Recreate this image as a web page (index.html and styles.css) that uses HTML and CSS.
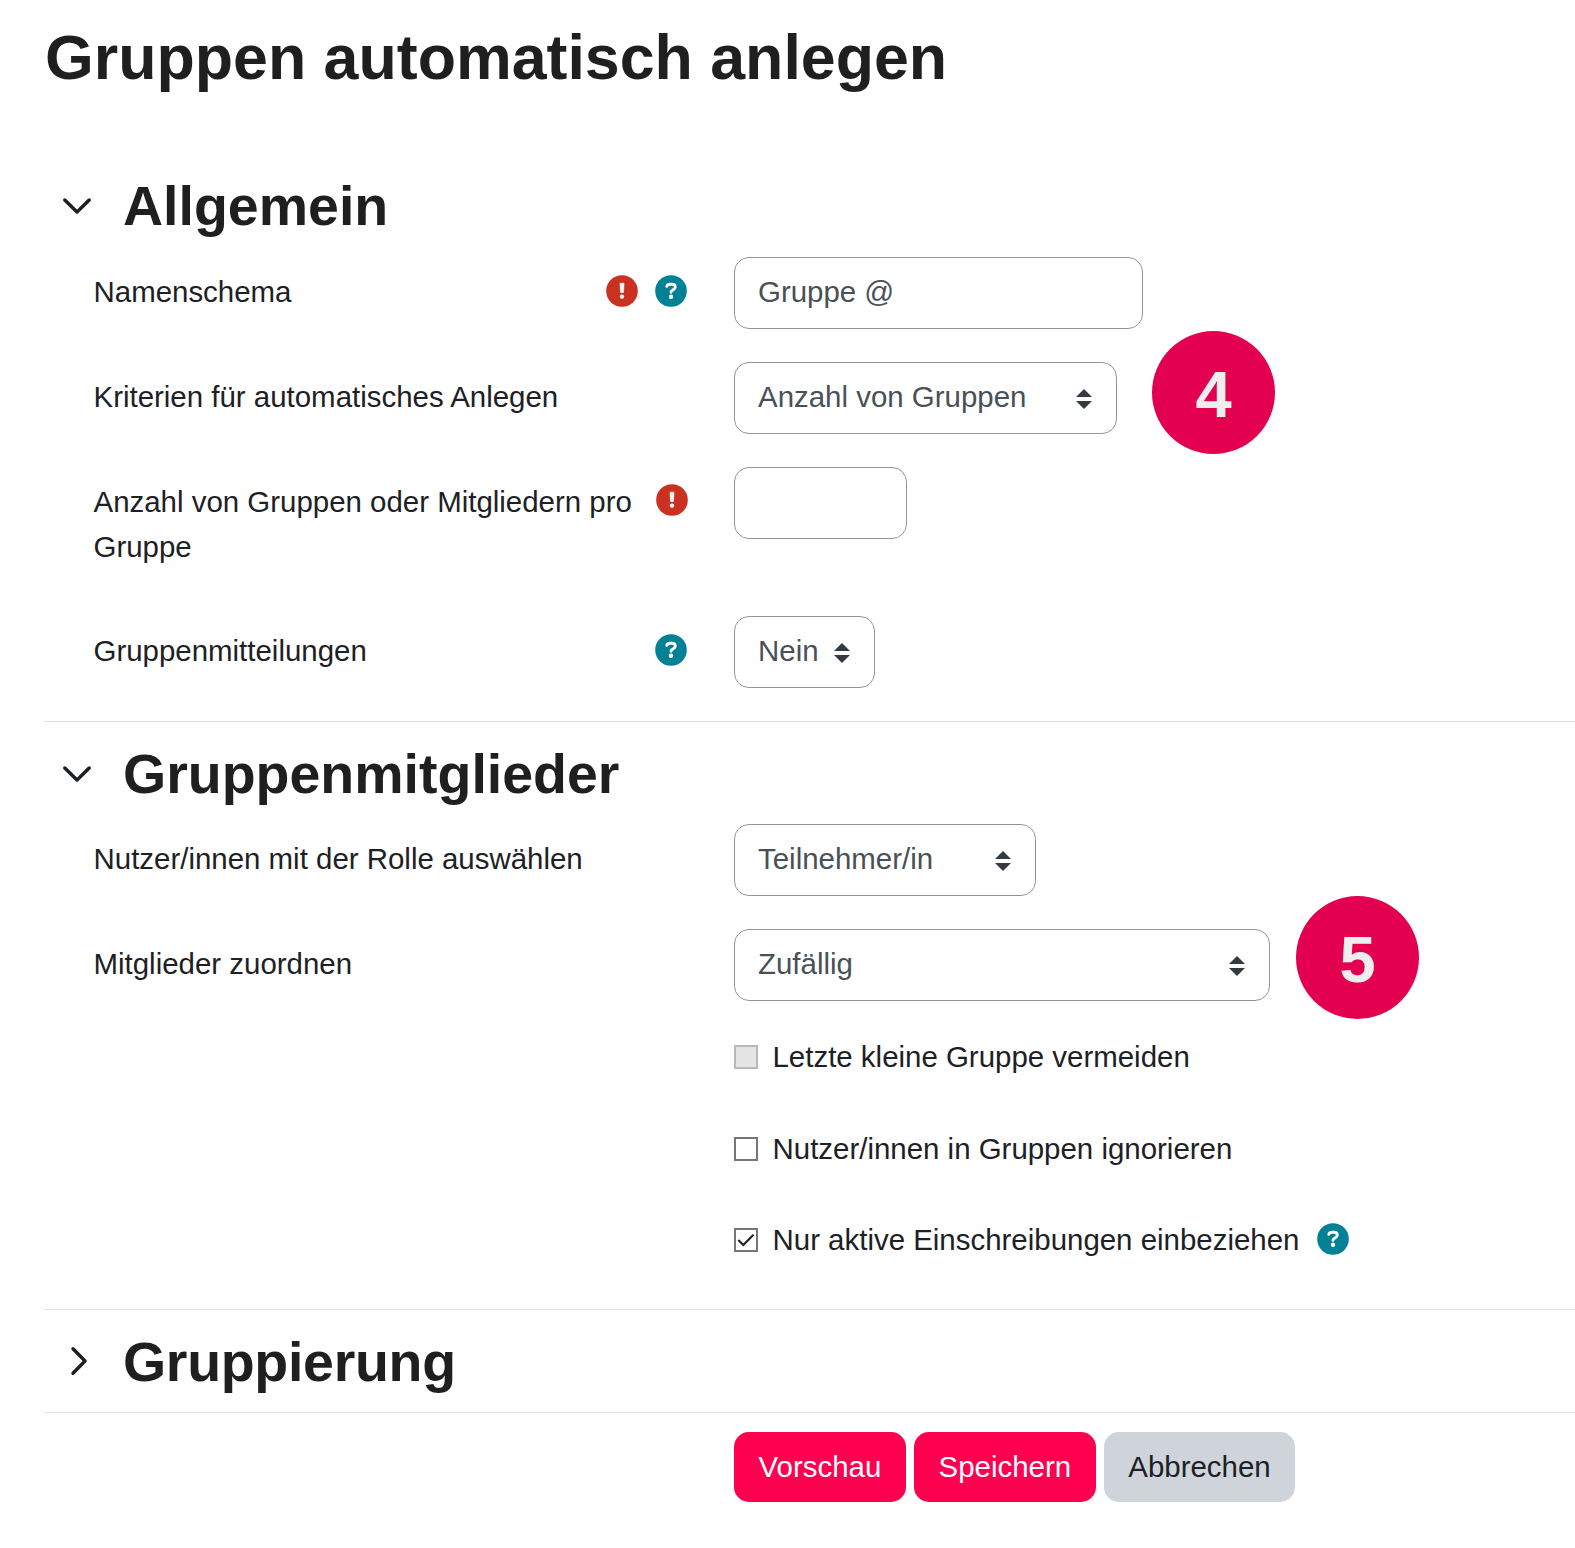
FILE: index.html
```html
<!DOCTYPE html>
<html lang="de">
<head>
    <meta charset="utf-8">
    <title>Gruppen automatisch anlegen</title>
    <meta name="viewport" content="width=device-width, initial-scale=1">
    <link rel="stylesheet" href="styles.css">
</head>
<body>
    <!-- icons used more than once -->
    <svg class="sprite" width="0" height="0">
        <symbol id="required" viewBox="0 0 32 32">
            <circle cx="16" cy="16" r="15.8" fill="#ca3120"/>
            <path d="M14 8.200h4l-.5 9.300h-3z" fill="#fff" stroke="#fff" stroke-width=".6" stroke-linejoin="round"/>
            <circle cx="16" cy="21.600" r="2.200" fill="#fff"/>
        </symbol>
        <symbol id="help" viewBox="0 0 32 32">
            <circle cx="16" cy="16" r="15.8" fill="#008196"/>
            <path d="M11.800 11.300C12.200 9.800 13.600 9.200 15.200 9.200h1.600c2.100 0 3.500 1.200 3.500 2.800 0 1.300-.8 2.100-2 2.800-1.400.8-2.300 1.100-2.300 2.400" fill="none" stroke="#fff" stroke-width="2.900" stroke-linecap="round"/>
            <circle cx="16" cy="21.800" r="2.200" fill="#fff"/>
        </symbol>
        <symbol id="chevron" viewBox="0 0 30 30">
            <path d="M2.800 9L15 21 27.200 9" fill="none" stroke="#1d2125" stroke-width="3.500" stroke-linecap="round" stroke-linejoin="round"/>
        </symbol>
    </svg>

    <div class="page">
        <h1>Gruppen automatisch anlegen</h1>
        <form action="">
            <section>
                <div class="header">
                    <svg class="chevron"><use href="#chevron"/></svg>
                    <h2>Allgemein</h2>
                </div>
                <div class="row">
                    <div class="label">
                        <label for="naming">Namenschema</label>
                        <svg class="icon"><use href="#required"/></svg>
                        <svg class="icon"><use href="#help"/></svg>
                    </div>
                    <input class="control naming" id="naming" type="text" value="Gruppe @">
                </div>
                <div class="row">
                    <div class="label"><label for="groupby">Kriterien für automatisches Anlegen</label></div>
                    <select class="control groupby" id="groupby">
                        <option>Anzahl von Gruppen</option>
                    </select>
                </div>
                <div class="row tall">
                    <div class="label">
                        <label for="number">Anzahl von Gruppen oder Mitgliedern pro Gruppe</label>
                        <svg class="icon"><use href="#required"/></svg>
                    </div>
                    <input class="control number" id="number" type="text">
                </div>
                <div class="row">
                    <div class="label">
                        <label for="messaging">Gruppenmitteilungen</label>
                        <svg class="icon"><use href="#help"/></svg>
                    </div>
                    <select class="control messaging" id="messaging">
                        <option>Nein</option>
                    </select>
                </div>
            </section>

            <section>
                <div class="header">
                    <svg class="chevron"><use href="#chevron"/></svg>
                    <h2>Gruppenmitglieder</h2>
                </div>
                <div class="row">
                    <div class="label"><label for="role">Nutzer/innen mit der Rolle auswählen</label></div>
                    <select class="control role" id="role">
                        <option>Teilnehmer/in</option>
                    </select>
                </div>
                <div class="row">
                    <div class="label"><label for="allocate">Mitglieder zuordnen</label></div>
                    <select class="control allocate" id="allocate">
                        <option>Zufällig</option>
                    </select>
                </div>
                <div class="check">
                    <input type="checkbox" id="small" disabled>
                    <label for="small">Letzte kleine Gruppe vermeiden</label>
                </div>
                <div class="check">
                    <input type="checkbox" id="ignore">
                    <label for="ignore">Nutzer/innen in Gruppen ignorieren</label>
                </div>
                <div class="check">
                    <input type="checkbox" id="active" checked>
                    <label for="active">Nur aktive Einschreibungen einbeziehen</label>
                    <svg class="icon"><use href="#help"/></svg>
                </div>
            </section>

            <section>
                <div class="header">
                    <svg class="chevron closed"><use href="#chevron"/></svg>
                    <h2>Gruppierung</h2>
                </div>
            </section>

            <div class="buttons">
                <button class="btn" type="button">Vorschau</button>
                <button class="btn" type="button">Speichern</button>
                <button class="btn cancel" type="button">Abbrechen</button>
            </div>
        </form>
        <div class="badge step4">4</div>
        <div class="badge step5">5</div>
    </div>
</body>
</html>
```
FILE: styles.css
```css
* {
    box-sizing: border-box;
}
body {
    margin: 0;
    background: #fff;
    color: #1d2125;
    font-family: "Liberation Sans", Arial, sans-serif;
    font-size: 29.44px;
    line-height: 45px;
}
.page {
    position: relative;
    height: 1548px;
    padding: 20px 0 0 44px;
    overflow: hidden;
}
.sprite {
    position: absolute;
}
h1, h2 {
    margin: 0;
    color: #1f1f1f;
    font-weight: bold;
}
h1 {
    margin-bottom: 59px;
    padding-left: 1px;
    font-size: 62.7px;
    line-height: 75px;
}
h2 {
    font-size: 55.5px;
    line-height: 66px;
}
section {
    border-bottom: 1px solid #dee2e6;
}
.header {
    display: flex;
    gap: 31px;
    padding: 19px 0 17.5px 18px;
}
.chevron {
    width: 30px;
    height: 30px;
    margin-top: 18px;
}
.closed {
    transform: translate(2px, -1px) rotate(-90deg);
}
.closed + h2 {
    letter-spacing: -0.3px;
}
.row {
    display: grid;
    grid-template-columns: 640.5px max-content;
    align-items: start;
    margin-bottom: 33px;
    padding-left: 49.5px;
}
.tall {
    margin-bottom: 47px;
}
.label {
    display: flex;
    gap: 17px;
    padding: 12px 47px 0 0;
}
.label label {
    flex: 1;
}
.icon {
    flex: none;
    width: 32px;
    height: 32px;
    margin-top: 6.5px;
}
.tall .label {
    padding-right: 46px;
}
.tall .icon {
    margin-top: 5.5px;
}
.control {
    height: 72px;
    padding: 0 23px 1px;
    border: 1px solid #8f959e;
    border-radius: 15px;
    background: #fff;
    color: #495057;
    font: inherit;
}
select.control {
    padding-bottom: 3px;
    appearance: none;
    background: #fff url("data:image/svg+xml,%3Csvg xmlns='http://www.w3.org/2000/svg' viewBox='0 0 4 5'%3E%3Cpath fill='%23343a40' d='M2 0L0 2h4zm0 5L0 3h4z'/%3E%3C/svg%3E") no-repeat right 24px top 26px / 16px 20px;
}
.naming {
    width: 409px;
}
.groupby {
    width: 383px;
}
.number {
    width: 173px;
}
.messaging {
    width: 141px;
}
.role {
    width: 302px;
}
.allocate {
    width: 536px;
}
.check {
    display: flex;
    margin: 0 0 46.5px 690px;
}
.check input {
    appearance: none;
    width: 24px;
    height: 24px;
    margin: 11px 14.5px 0 0;
    border: 2px solid #767676;
    background: #fff;
}
.check input:disabled {
    border-color: #b9b9b9;
    background: #e5e5e5;
}
.check input:checked {
    background: url("data:image/svg+xml,%3Csvg xmlns='http://www.w3.org/2000/svg' viewBox='0 0 20 20'%3E%3Cpath fill='none' stroke='%23222' stroke-width='2.2' d='M2.300 10l5 5L17.500 4.800'/%3E%3C/svg%3E") center / 20px 20px;
}
.check .icon {
    margin: 6px 0 0 18px;
}
.buttons {
    display: flex;
    gap: 8px;
    padding: 19px 0 0 690px;
}
.btn {
    height: 70px;
    padding: 0 24.6px 2px;
    border: 0;
    border-radius: 15px;
    background: #ff0050;
    color: #fff;
    font: inherit;
}
.cancel {
    background: #ced4da;
    color: #1d2125;
}
/* numbered markers lying over the form */
.badge {
    position: absolute;
    width: 123px;
    height: 123px;
    border-radius: 50%;
    background: #e2004f;
    color: #eee;
    font-size: 65px;
    font-weight: bold;
    line-height: 128px;
    text-align: center;
}
.step4 {
    top: 331px;
    left: 1152px;
}
.step5 {
    top: 896px;
    left: 1296px;
}
```
